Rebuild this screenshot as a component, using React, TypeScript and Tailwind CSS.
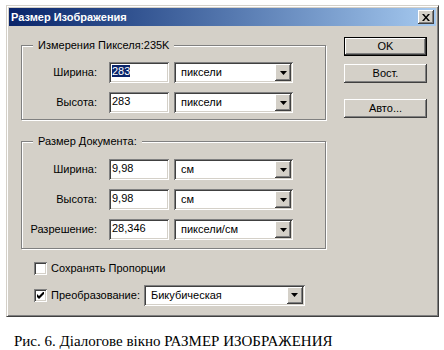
const raised =
  'shadow-[inset_-1px_-1px_#404040,inset_1px_1px_#ffffff,inset_-2px_-2px_#808080,inset_2px_2px_#d4d0c8]'
const sunken =
  'shadow-[inset_1px_1px_#808080,inset_-1px_-1px_#ffffff,inset_2px_2px_#404040,inset_-2px_-2px_#d4d0c8]'

const Field = ({ value, selected }: { value: string; selected?: boolean }) => (
  <div className={`w-[60px] h-[21px] bg-white ${sunken} pl-[3px] pt-[3px] text-[11px] leading-[13px]`}>
    {selected ? <span className="bg-[#0a246a] text-white">{value}</span> : value}
  </div>
)

const Select = ({ value, width }: { value: string; width: string }) => (
  <div className={`${width} h-[21px] bg-white ${sunken} flex items-center p-[2px]`}>
    <span className="flex-1 pl-[5px] text-[11px] leading-[13px]">{value}</span>
    <div className={`w-[16px] h-[17px] bg-[#d4d0c8] ${raised} flex items-center justify-center`}>
      <svg width="7" height="4" viewBox="0 0 7 4">
        <path d="M0 0h7L3.5 4z" fill="#000" />
      </svg>
    </div>
  </div>
)

const Row = ({ label, value, unit, selected }: { label: string; value: string; unit: string; selected?: boolean }) => (
  <div className="flex items-center h-[21px]">
    <span className="w-[75px] text-right text-[11px]">{label}</span>
    <div className="ml-[12px]">
      <Field value={value} selected={selected} />
    </div>
    <div className="ml-[5px]">
      <Select value={unit} width="w-[119px]" />
    </div>
  </div>
)

const Group = ({ title, children, className }: { title: string; children: React.ReactNode; className: string }) => (
  <div className={`relative w-[305px] border border-[#808080] shadow-[1px_1px_0_#ffffff,inset_1px_1px_0_#ffffff] ${className}`}>
    <span className="absolute -top-[8px] left-[11px] bg-[#d4d0c8] px-[5px] text-[11px] leading-[14px]">{title}</span>
    {children}
  </div>
)

const Button = ({ label, def }: { label: string; def?: boolean }) => (
  <div
    className={`w-[83px] h-[19px] flex items-center justify-center text-[11px] ${def ? 'border border-black' : ''} ${raised}`}
  >
    {label}
  </div>
)

const App = () => {
  return (
    <div className="w-[444px] h-[350px] overflow-hidden bg-white text-black font-['Liberation_Sans',Arial,sans-serif] pt-[5px] pl-[6px]">
      <div className="w-[433px] h-[312px] bg-[#d4d0c8] border border-t-[#d4d0c8] border-l-[#d4d0c8] border-r-[#404040] border-b-[#404040] shadow-[inset_1px_1px_#ffffff,inset_-1px_-1px_#808080] p-[2px]">
        <div className="h-[18px] bg-gradient-to-r from-[#0a246a] to-[#a6caf0] flex items-center justify-between pl-[2px] pr-[2px]">
          <span className="text-white font-bold text-[11px]">Размер Изображения</span>
          <div className={`w-[16px] h-[14px] bg-[#d4d0c8] ${raised} flex items-center justify-center`}>
            <svg width="8" height="7" viewBox="0 0 8 7">
              <path d="M0 0h2l2 2.5L6 0h2L5 3.5 8 7H6L4 4.5 2 7H0l3-3.5z" fill="#000" />
            </svg>
          </div>
        </div>
        <div className="flex pl-[12px] pt-[11px]">
          <div className="mt-[8px] w-[305px]">
            <Group title="Измерения Пикселя:235K" className="h-[75px] pt-[16px] flex flex-col gap-[9px]">
              <Row label="Ширина:" value="283" unit="пиксели" selected />
              <Row label="Высота:" value="283" unit="пиксели" />
            </Group>
            <Group title="Размер Документа:" className="mt-[21px] h-[108px] pt-[17px] flex flex-col gap-[9px]">
              <Row label="Ширина:" value="9,98" unit="см" />
              <Row label="Высота:" value="9,98" unit="см" />
              <Row label="Разрешение:" value="28,346" unit="пиксели/см" />
            </Group>
            <div className="mt-[11px] pl-[13px] flex flex-col gap-[8px]">
              <div className="flex items-center">
                <div className={`w-[13px] h-[13px] bg-white ${sunken}`} />
                <span className="ml-[4px] text-[11px]">Сохранять Пропорции</span>
              </div>
              <div className="flex items-center">
                <div className={`w-[13px] h-[13px] bg-white ${sunken} flex items-center justify-center`}>
                  <svg width="7" height="7" viewBox="0 0 7 7">
                    <path d="M0 2v3l2 2 5-5V-1L2 4z" fill="#000" />
                  </svg>
                </div>
                <span className="ml-[4px] text-[11px]">Преобразование:</span>
                <div className="ml-[4px]">
                  <Select value="Бикубическая" width="w-[161px]" />
                </div>
              </div>
            </div>
          </div>
          <div className="ml-[18px] flex flex-col">
            <Button label="OK" def />
            <div className="mt-[8px]">
              <Button label="Вост." />
            </div>
            <div className="mt-[16px]">
              <Button label="Авто..." />
            </div>
          </div>
        </div>
      </div>
      <p className="mt-[17px] ml-[8px] font-['Liberation_Serif','Times_New_Roman',serif] text-[15px] leading-[15px]">
        Рис. 6. Діалогове вікно РАЗМЕР ИЗОБРАЖЕНИЯ
      </p>
    </div>
  )
}

export default App
